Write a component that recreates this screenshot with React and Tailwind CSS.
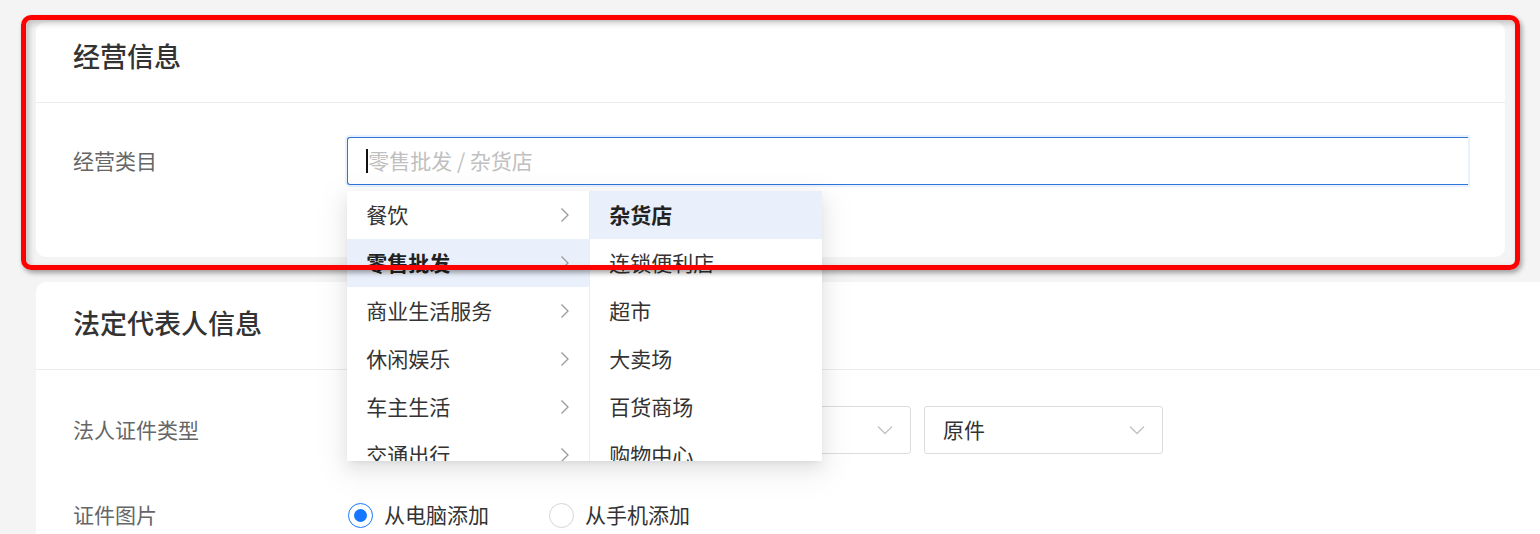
import React from 'react'

const FONT = { fontFamily: '"Noto Sans CJK SC", "Noto Sans", "Liberation Sans", sans-serif' }

const level1 = ['餐饮', '零售批发', '商业生活服务', '休闲娱乐', '车主生活', '交通出行']
const level2 = ['杂货店', '连锁便利店', '超市', '大卖场', '百货商场', '购物中心']

const ChevronRight = () => (
    <svg width="10" height="16" viewBox="0 0 10 16" fill="none" stroke="#9a9a9a" strokeWidth="1.3">
        <polyline points="1.5,1.5 8,8 1.5,14.5" />
    </svg>
)

const ChevronDown = () => (
    <svg width="16" height="10" viewBox="0 0 16 10" fill="none" stroke="#c2c2c2" strokeWidth="1.3">
        <polyline points="1,1.5 8,8.5 15,1.5" />
    </svg>
)

const Radio = ({ checked, label }) => (
    <div className="flex items-center gap-[11px]">
        <div
            className={`w-[25px] h-[25px] rounded-full border-[1.5px] flex items-center justify-center bg-white ${checked ? 'border-[#1677ff]' : 'border-[#d6d6d6]'}`}
        >
            {checked && <div className="w-[13px] h-[13px] rounded-full bg-[#1677ff]" />}
        </div>
        <span className="text-[21px] text-[#333]">{label}</span>
    </div>
)

const Cascader = () => (
    <div className="absolute left-0 top-[54px] z-20 w-[475px] h-[270px] flex bg-white overflow-hidden shadow-[0_6px_16px_rgba(0,0,0,0.08),0_3px_6px_-4px_rgba(0,0,0,0.12),0_9px_28px_8px_rgba(0,0,0,0.05)]">
        {/* first level */}
        <div className="w-[243px] border-r border-[#ececec]">
            {level1.map((item) => {
                const active = item === '零售批发'
                return (
                    <div
                        key={item}
                        className={`h-[48px] flex items-center justify-between pl-[19px] pr-[19px] text-[21px] ${active ? 'bg-[#e9f0fc] font-semibold text-[#222]' : 'text-[#333]'}`}
                    >
                        <span>{item}</span>
                        <ChevronRight />
                    </div>
                )
            })}
        </div>
        {/* second level */}
        <div className="flex-1">
            {level2.map((item) => {
                const active = item === '杂货店'
                return (
                    <div
                        key={item}
                        className={`h-[48px] flex items-center pl-[19px] text-[21px] ${active ? 'bg-[#e9f0fc] font-semibold text-[#222]' : 'text-[#333]'}`}
                    >
                        {item}
                    </div>
                )
            })}
        </div>
    </div>
)

export default function App() {
    return (
        <div className="relative h-[534px] overflow-hidden bg-[#f4f4f4] pt-[22px] pl-[36px]" style={FONT}>
            {/* 经营信息 */}
            <div className="w-[1469px] h-[235px] bg-white rounded-[10px]">
                <div className="h-[81px] flex items-center pb-[11px] px-[37px] border-b border-[#ececec]">
                    <h2 className="text-[27px] font-medium text-[#333]">经营信息</h2>
                </div>
                <div className="pt-[34px] px-[37px] flex">
                    <div className="w-[275px] h-[48px] flex items-center text-[21px] text-[#666]">经营类目</div>
                    <div className="relative w-[1124px] h-[48px]">
                        <div className="h-full flex items-center pl-[18px] border border-r-0 border-[#2f74d8] rounded-l-[3px] shadow-[0_0_0_2px_rgba(24,119,255,0.1)]">
                            <span className="w-[2px] h-[24px] bg-[#111]" />
                            <span className="text-[21px] text-[#c0c0c0]">零售批发 / 杂货店</span>
                        </div>
                        <Cascader />
                    </div>
                </div>
            </div>

            {/* 法定代表人信息 */}
            <div className="mt-[25px] w-[1540px] h-[300px] bg-white rounded-tl-[10px]">
                <div className="h-[88px] flex items-center pb-[4px] px-[37px] border-b border-[#ececec]">
                    <h2 className="text-[27px] font-medium text-[#333]">法定代表人信息</h2>
                </div>
                <div className="px-[37px] pt-[36px] flex flex-col gap-[37px]">
                    <div className="flex items-center">
                        <div className="w-[275px] text-[21px] text-[#666]">法人证件类型</div>
                        <div className="flex gap-[13px]">
                            <div className="w-[563px] h-[48px] flex items-center justify-between pl-[18px] pr-[17px] border border-[#dcdcdc] rounded-[3px]">
                                <span className="text-[21px] text-[#333]">身份证</span>
                                <ChevronDown />
                            </div>
                            <div className="w-[239px] h-[48px] flex items-center justify-between pl-[18px] pr-[17px] border border-[#dcdcdc] rounded-[3px]">
                                <span className="text-[21px] text-[#333]">原件</span>
                                <ChevronDown />
                            </div>
                        </div>
                    </div>
                    <div className="flex items-center h-[48px]">
                        <div className="w-[275px] text-[21px] text-[#666]">证件图片</div>
                        <div className="flex items-center gap-[60px]">
                            <Radio checked label="从电脑添加" />
                            <Radio label="从手机添加" />
                        </div>
                    </div>
                </div>
            </div>

            {/* annotation frame */}
            <div className="pointer-events-none absolute left-[21px] top-[15px] z-30 w-[1499px] h-[255px] border-[5px] border-[#ff0000] rounded-[10px] shadow-[2px_3px_5px_rgba(0,0,0,0.35),inset_3px_3px_6px_rgba(0,0,0,0.22)]" />
        </div>
    )
}
